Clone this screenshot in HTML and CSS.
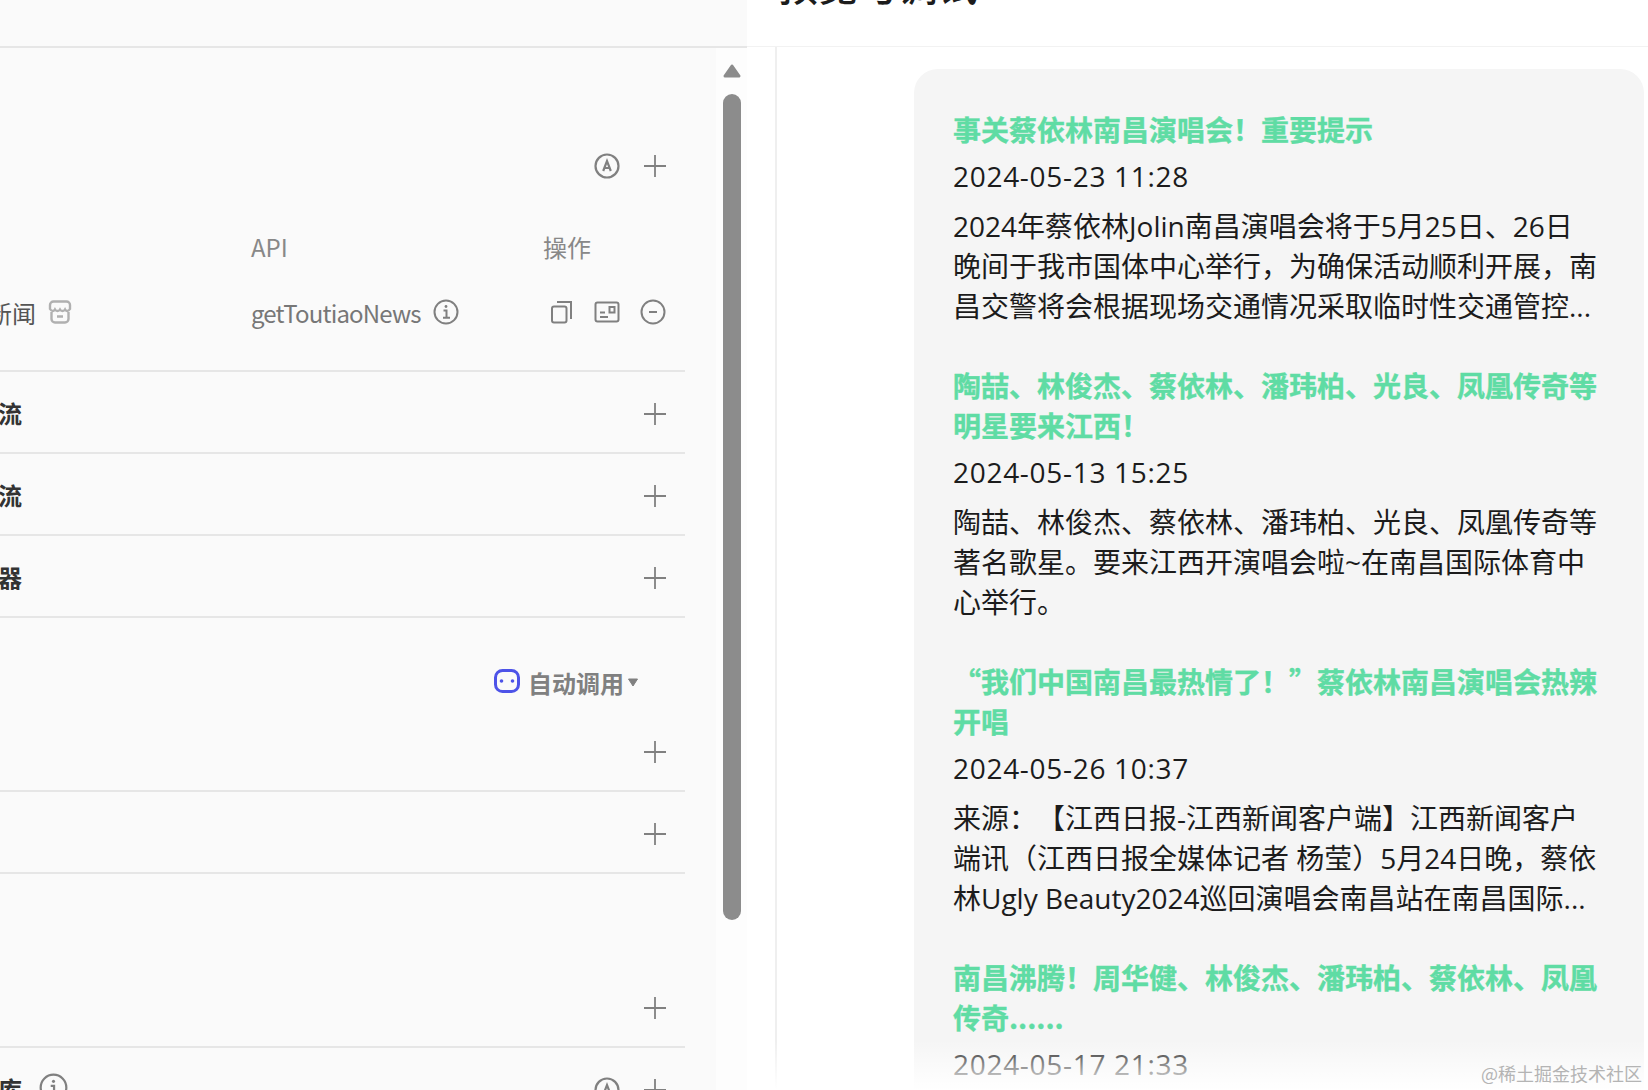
FILE: index.html
```html
<!DOCTYPE html>
<html lang="zh-CN">
<head>
    <meta charset="UTF-8">
    <title>Bot 编排</title>
    <link rel="stylesheet" href="styles.css">
</head>
<body>
    <div class="sidebar">
        <div class="side-head"></div>
        <div class="side-main">
            <div class="side-list">
                <!-- 插件 -->
                <div class="section plugin-section">
                    <div class="row">
                        <span class="sec-title">插件</span>
                        <svg class="icon a-icon" viewBox="0 0 26 26"><circle cx="13" cy="13" r="11.500"/><path d="M9.200 18 13 8l3.800 10M10.400 15h5.200"/></svg>
                        <svg class="icon plus" viewBox="0 0 24 24"><path d="M12 1v22M1 12h22"/></svg>
                    </div>
                    <div class="row table-head">
                        <span class="col-name">名称</span>
                        <span class="col-api">API</span>
                        <span class="col-op">操作</span>
                    </div>
                    <div class="row">
                        <span class="col-name plugin-name">头条新闻
                            <svg class="icon store" viewBox="0 0 24 24"><path d="M2 9V5a3.500 3.500 0 0 1 3.500-3.500h13A3.500 3.500 0 0 1 22 5v4c-1.500 2.500-4 2.500-5 .5-1.200 2-3.800 2-5 0-1.200 2-3.800 2-5 0-1 2-3.500 2-5-.5zM3.500 12v7a3.500 3.500 0 0 0 3.500 3.500h10a3.500 3.500 0 0 0 3.500-3.500v-7M9 16.500h6"/></svg>
                        </span>
                        <span class="col-api api-name">getToutiaoNews
                            <svg class="icon info" viewBox="0 0 26 26"><circle cx="13" cy="13" r="11.500"/><path d="M10.500 11.500H13.500V18.500M10 18.800h7"/><circle class="dot" cx="13" cy="7.500" r="1.400"/></svg>
                        </span>
                        <span class="col-op op-icons">
                            <svg class="icon copy" viewBox="0 0 24 24"><rect x="2" y="6.500" width="14.500" height="16" rx="2"/><path d="M7 2h14v17"/></svg>
                            <svg class="icon card" viewBox="0 0 26 22"><rect x="1.500" y="1.500" width="23" height="19" rx="2"/><path d="M6 11.500h5M6 16h8"/><rect x="15.500" y="6" width="5" height="5.500"/></svg>
                            <svg class="icon minus" viewBox="0 0 26 26"><circle cx="13" cy="13" r="11.500"/><path d="M9 13h8"/></svg>
                        </span>
                    </div>
                </div>

                <div class="section">
                    <div class="row">
                        <span class="sec-title">工作流</span>
                        <svg class="icon plus" viewBox="0 0 24 24"><path d="M12 1v22M1 12h22"/></svg>
                    </div>
                </div>
                <div class="section">
                    <div class="row">
                        <span class="sec-title">图像流</span>
                        <svg class="icon plus" viewBox="0 0 24 24"><path d="M12 1v22M1 12h22"/></svg>
                    </div>
                </div>
                <div class="section">
                    <div class="row">
                        <span class="sec-title">触发器</span>
                        <svg class="icon plus" viewBox="0 0 24 24"><path d="M12 1v22M1 12h22"/></svg>
                    </div>
                </div>

                <!-- 知识 -->
                <div class="section knowledge-section">
                    <div class="row auto-row">
                        <span class="auto-call">
                            <svg class="icon robot" viewBox="0 0 26 24"><rect x="1.500" y="1.500" width="23" height="21" rx="7"/><circle cx="7.500" cy="12" r="1.800"/><circle cx="18.500" cy="12" r="1.800"/></svg>
                            自动调用
                            <svg class="caret" viewBox="0 0 12 9"><path d="M1.500 1h9L6 8z"/></svg>
                        </span>
                    </div>
                    <div class="row knowledge-row">
                        <svg class="icon plus" viewBox="0 0 24 24"><path d="M12 1v22M1 12h22"/></svg>
                    </div>
                </div>
                <div class="section">
                    <div class="row">
                        <svg class="icon plus" viewBox="0 0 24 24"><path d="M12 1v22M1 12h22"/></svg>
                    </div>
                </div>
                <div class="section memory-section">
                    <div class="row">
                        <svg class="icon plus" viewBox="0 0 24 24"><path d="M12 1v22M1 12h22"/></svg>
                    </div>
                </div>
                <div class="section last-section">
                    <div class="row">
                        <span class="sec-title">数据库</span>
                        <svg class="icon info title-info" viewBox="0 0 26 26"><circle cx="13" cy="13" r="11.500"/><path d="M10.500 11.500H13.500V18.500M10 18.800h7"/><circle class="dot" cx="13" cy="7.500" r="1.400"/></svg>
                        <svg class="icon a-icon" viewBox="0 0 26 26"><circle cx="13" cy="13" r="11.500"/><path d="M9.200 18 13 8l3.800 10M10.400 15h5.200"/></svg>
                        <svg class="icon plus" viewBox="0 0 24 24"><path d="M12 1v22M1 12h22"/></svg>
                    </div>
                </div>
            </div>
            <div class="scroll-gutter">
                <svg class="scroll-arrow" viewBox="0 0 18 14"><path d="M9 2 16 12H2z"/></svg>
                <div class="scroll-thumb"></div>
            </div>
        </div>
    </div>

    <div class="preview">
        <div class="preview-head">
            <h1 class="preview-title">预览与调试</h1>
        </div>
        <div class="preview-body">
            <div class="msg-wrap">
                <div class="msg-card">
                    <div class="news-item">
                        <div class="news-title">事关蔡依林南昌演唱会！重要提示</div>
                        <div class="news-date">2024-05-23 11:28</div>
                        <div class="news-text">2024年蔡依林Jolin南昌演唱会将于5月25日、26日<br>晚间于我市国体中心举行，为确保活动顺利开展，南<br>昌交警将会根据现场交通情况采取临时性交通管控...</div>
                    </div>
                    <div class="news-item">
                        <div class="news-title">陶喆、林俊杰、蔡依林、潘玮柏、光良、凤凰传奇等<br>明星要来江西！</div>
                        <div class="news-date">2024-05-13 15:25</div>
                        <div class="news-text">陶喆、林俊杰、蔡依林、潘玮柏、光良、凤凰传奇等<br>著名歌星。要来江西开演唱会啦~在南昌国际体育中<br>心举行。</div>
                    </div>
                    <div class="news-item">
                        <div class="news-title">“我们中国南昌最热情了！”蔡依林南昌演唱会热辣<br>开唱</div>
                        <div class="news-date">2024-05-26 10:37</div>
                        <div class="news-text">来源：【江西日报-江西新闻客户端】江西新闻客户<br>端讯（江西日报全媒体记者 杨莹）5月24日晚，蔡依<br>林Ugly Beauty2024巡回演唱会南昌站在南昌国际...</div>
                    </div>
                    <div class="news-item">
                        <div class="news-title">南昌沸腾！周华健、林俊杰、潘玮柏、蔡依林、凤凰<br>传奇......</div>
                        <div class="news-date">2024-05-17 21:33</div>
                    </div>
                </div>
            </div>
            <div class="bottom-fade"></div>
        </div>
        <div class="watermark">@稀土掘金技术社区</div>
    </div>
</body>
</html>
```

FILE: styles.css
```css
html, body {
    margin: 0;
    padding: 0;
    height: 1090px;
    overflow: hidden;
}

body {
    display: flex;
    background-color: #fff;
    font-family: "Noto Sans CJK SC", "Noto Sans", sans-serif;
    color: #1c1c1c;
}

.icon {
    flex: none;
    fill: none;
    stroke: #808080;
    stroke-width: 2;
}

/* left column */
.sidebar {
    width: 747px;
    flex: none;
    display: flex;
    flex-direction: column;
    overflow: hidden;
}

.side-head {
    height: 46px;
    background-color: #fafafa;
    border-bottom: 2px solid #e6e6e6;
}

.side-main {
    flex: 1;
    display: flex;
    min-height: 0;
}

.side-list {
    width: 716px;
    flex: none;
    box-sizing: border-box;
    background-color: #fafafa;
    padding-right: 31px;
    overflow: hidden;
}

.section {
    margin-left: -50px;
    padding: 24px 0 20px;
    border-bottom: 2px solid #e6e6e6;
}

.row {
    display: flex;
    align-items: center;
    height: 36px;
}

.sec-title {
    margin-bottom: 2px;
    font-size: 24px;
    line-height: 36px;
    font-weight: 700;
    color: #333;
    white-space: nowrap;
}

.plus {
    width: 24px;
    height: 24px;
    margin-left: auto;
    margin-right: 18px;
    stroke-width: 1.800;
}

.a-icon {
    width: 26px;
    height: 26px;
    margin-left: auto;
    margin-right: 23px;
    stroke-width: 2.200;
}

.a-icon + .plus {
    margin-left: 0;
}

.plugin-section {
    padding-top: 100px;
    padding-bottom: 40px;
}

.plugin-section .sec-title {
    visibility: hidden;
}

.table-head {
    margin-top: 44px;
    margin-bottom: 30px;
    font-size: 24px;
    color: #888;
}

.col-name {
    width: 311px;
    flex: none;
    margin-left: -10px;
    display: flex;
    align-items: center;
    gap: 12px;
    font-size: 24px;
    color: #555;
    white-space: nowrap;
}

.table-head .col-name {
    color: #888;
}

.col-api {
    width: 292px;
    flex: none;
    display: flex;
    align-items: center;
    gap: 12px;
    white-space: nowrap;
}

.col-op {
    white-space: nowrap;
}

.api-name {
    font-size: 24px;
    letter-spacing: -0.85px;
    color: #777;
}

.store {
    width: 24px;
    height: 24px;
    stroke: #b0b0b0;
    stroke-width: 2.400;
}

.info {
    width: 26px;
    height: 26px;
}

.info .dot {
    fill: #808080;
    stroke: none;
}

.op-icons {
    display: flex;
    align-items: center;
    margin-left: 7px;
}

.copy {
    width: 24px;
    height: 24px;
}

.card {
    width: 26px;
    height: 22px;
    margin-left: 20px;
}

.minus {
    width: 26px;
    height: 26px;
    margin-left: 20px;
}

.knowledge-section {
    padding-top: 48px;
}

.auto-row {
    justify-content: flex-end;
    margin-bottom: 32px;
}

.auto-call {
    display: flex;
    align-items: center;
    margin-right: 46px;
    margin-bottom: 4px;
    font-size: 24px;
    font-weight: 700;
    color: #808080;
}

.robot {
    width: 26px;
    height: 24px;
    margin-right: 8px;
    margin-bottom: 2px;
    stroke: #4d53e8;
    stroke-width: 3;
}

.robot circle {
    fill: #4d53e8;
    stroke: none;
}

.caret {
    width: 12px;
    height: 9px;
    margin-left: 3px;
    fill: #808080;
    stroke: #808080;
    stroke-width: 1;
    stroke-linejoin: round;
}

.memory-section {
    padding-top: 116px;
}

.last-section {
    border-bottom: none;
}

.title-info {
    width: 29px;
    height: 29px;
    margin-left: 17px;
    margin-bottom: 5px;
}

.scroll-gutter {
    flex: 1;
    display: flex;
    flex-direction: column;
    align-items: center;
    padding: 16px 6px 0 7px;
    background-color: #fdfdfd;
}

.scroll-arrow {
    width: 18px;
    height: 14px;
    fill: #8c8c8c;
    stroke: #8c8c8c;
    stroke-width: 3;
    stroke-linejoin: round;
}

.scroll-thumb {
    width: 18px;
    height: 826px;
    margin-top: 16px;
    border-radius: 9px;
    background-color: #8c8c8c;
}

/* right column */
.preview {
    flex: 1;
    min-width: 0;
    display: flex;
    flex-direction: column;
    position: relative;
    background-color: #fff;
    overflow: hidden;
}

.preview-head {
    height: 47px;
    flex: none;
    box-sizing: border-box;
    padding-left: 31px;
    border-bottom: 1px solid #f2f2f2;
    overflow: hidden;
}

.preview-title {
    margin: -38px 0 0;
    font-size: 40px;
    line-height: 44px;
    font-weight: 500;
    color: #1c1c1c;
}

.preview-body {
    flex: 1;
    min-height: 0;
    position: relative;
    padding-left: 28px;
    overflow: hidden;
}

.msg-wrap {
    height: 100%;
    box-sizing: border-box;
    padding: 22px 4px 0 137px;
    border-left: 2px solid #efefef;
}

.msg-card {
    padding: 40px 42px 40px 39px;
    border-radius: 24px;
    background-color: #f5f5f5;
    font-size: 28px;
    line-height: 40px;
    text-spacing-trim: space-all;
}

.news-item {
    margin-bottom: 39px;
}

.news-title {
    margin-bottom: 7px;
    font-weight: 700;
    color: #5fdca4;
    -webkit-text-stroke: 0.4px #5fdca4;
}

.news-date {
    margin-bottom: 10px;
    font-family: "Open Sans", "Noto Sans CJK SC", sans-serif;
    letter-spacing: 0.7px;
}

.news-text {
    font-family: "Open Sans", "Noto Sans CJK SC", sans-serif;
    white-space: nowrap;
}

.bottom-fade {
    position: absolute;
    left: 0;
    right: 0;
    bottom: 0;
    height: 50px;
    background: linear-gradient(rgba(255, 255, 255, 0), #fff);
}

.watermark {
    position: absolute;
    right: 6px;
    bottom: 5px;
    font-size: 18px;
    line-height: 24px;
    color: #b4b4b4;
}
```
